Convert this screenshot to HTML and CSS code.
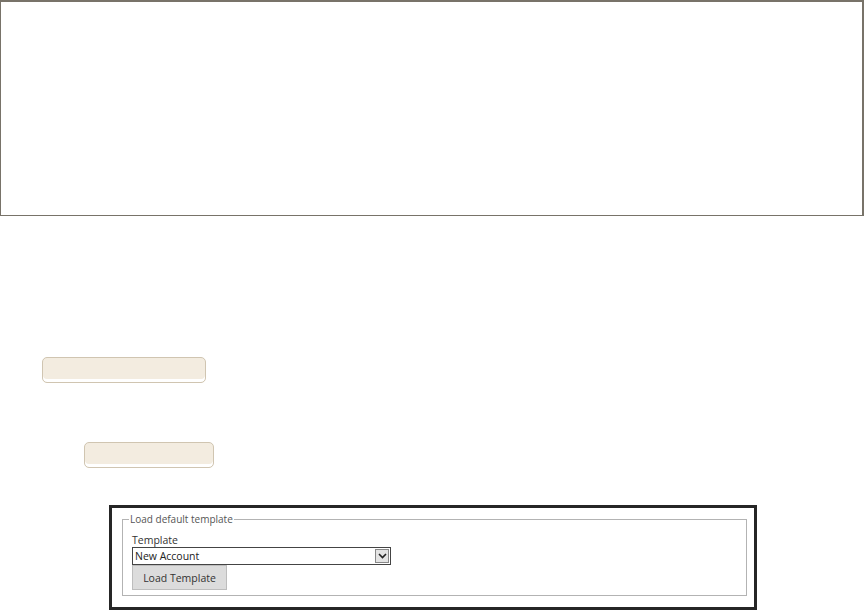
FILE: index.html
```html
<!DOCTYPE html>
<html lang="en">
<head>
  <meta charset="UTF-8">
  <title>Template loader</title>
  <link rel="stylesheet" href="styles.css">
</head>
<body>
  <div class="top-panel"></div>

  <div class="pill pill-wide"></div>
  <div class="pill pill-narrow"></div>

  <div class="shot">
    <fieldset class="group">
      <legend>Load default template</legend>
      <label class="field-label" for="tpl">Template</label>
      <div class="select">
        <span class="select-value">New Account</span>
        <span class="select-arrow">
          <svg width="9" height="6" viewBox="0 0 9 6"><path d="M1 1 L4.5 4.5 L8 1" fill="none" stroke="#222" stroke-width="1.6"/></svg>
        </span>
      </div>
      <button class="load-btn" type="button">Load Template</button>
    </fieldset>
  </div>
</body>
</html>
```

FILE: styles.css
```css
html, body {
  margin: 0;
  padding: 0;
  background: #fff;
  font-family: "Open Sans", "Liberation Sans", sans-serif;
}

/* big empty panel at the top */
.top-panel {
  box-sizing: border-box;
  width: 864px;
  height: 216px;
  border: 1px solid #787369;
  border-top-width: 2px;
  border-right-width: 2px;
}

/* beige placeholder pills */
.pill {
  box-sizing: border-box;
  height: 26px;
  background: #f3ece0;
  border: 1px solid #d0c5b1;
  border-radius: 5px;
  box-shadow: inset 0 -3px 0 #fff;
}

.pill-wide {
  width: 164px;
  margin: 141px 0 0 42px;
}

.pill-narrow {
  width: 130px;
  margin: 59px 0 0 84px;
}

/* screenshot frame */
.shot {
  box-sizing: border-box;
  width: 648px;
  height: 105px;
  margin: 37px 0 0 109px;
  border: 3px solid #262626;
  padding: 5px 7px 0 10px;
}

.group {
  margin: 0;
  padding: 0 0 5px 9px;
  border: 1px solid #b3b3b3;
  font-size: 10.5px;
  color: #333;
}

.group legend {
  padding: 0 1px;
  margin-left: -3px;
  color: #555;
  font-size: 10px;
  line-height: 13px;
}

.field-label {
  display: block;
  font-size: 10.5px;
  line-height: 13px;
  margin-top: 8px;
  color: #333;
}

.select {
  display: flex;
  align-items: center;
  box-sizing: border-box;
  width: 259px;
  height: 18px;
  border: 1px solid #444;
  background: #fff;
}

.select-value {
  flex: 1;
  padding-left: 2px;
  font-size: 10.5px;
  color: #222;
}

.select-arrow {
  box-sizing: border-box;
  width: 14px;
  height: 14px;
  margin-right: 1px;
  border: 1px solid #888;
  background: #e4e4e4;
  display: flex;
  align-items: center;
  justify-content: center;
}

.load-btn {
  display: block;
  box-sizing: border-box;
  width: 95px;
  height: 25px;
  margin: 0;
  padding: 0;
  background: #dcdcdc;
  border: 1px solid #bdbdbd;
  font-family: "Open Sans", "Liberation Sans", sans-serif;
  font-size: 10.5px;
  color: #333;
}
```
